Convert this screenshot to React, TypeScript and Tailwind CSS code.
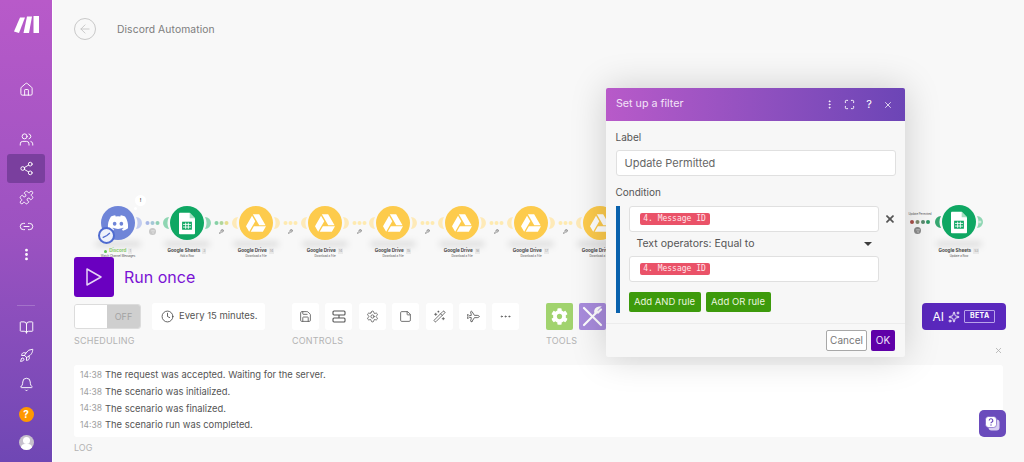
import type { ReactNode } from 'react';
import {
  ArrowLeft,
  Bell,
  BookOpen,
  Clock,
  EllipsisVertical,
  Ellipsis,
  House,
  Link2,
  Maximize,
  Plane,
  Puzzle,
  Rocket,
  Save,
  Settings,
  Share2,
  StickyNote,
  Users,
  WandSparkles,
  Wrench,
  X,
  Sparkles,
  Filter,
} from 'lucide-react';
import { FaDiscord, FaGoogleDrive, FaCog } from 'react-icons/fa';

const logLines = [
  'The request was accepted. Waiting for the server.',
  'The scenario was initialized.',
  'The scenario was finalized.',
  'The scenario run was completed.',
];

type NodeKind = 'discord' | 'sheets' | 'drive';

const nodes: {
  kind: NodeKind;
  x: number;
  title: string;
  sub: string;
  id: string;
  dots?: string[];
  filter?: boolean;
}[] = [
  { kind: 'discord', x: 118, title: 'Discord', sub: 'Watch Channel Messages', id: '1', dots: ['#a9b8e6', '#a4c6d6', '#8fcfb4'], filter: true },
  { kind: 'sheets', x: 187, title: 'Google Sheets', sub: 'Add a Row', id: '3', dots: ['#86d0a6', '#b0d69a', '#e6dd90'] },
  { kind: 'drive', x: 256, title: 'Google Drive', sub: 'Download a File', id: '14' },
  { kind: 'drive', x: 325, title: 'Google Drive', sub: 'Download a File', id: '14' },
  { kind: 'drive', x: 393, title: 'Google Drive', sub: 'Download a File', id: '15' },
  { kind: 'drive', x: 462, title: 'Google Drive', sub: 'Download a File', id: '16' },
  { kind: 'drive', x: 531, title: 'Google Drive', sub: 'Download a File', id: '17' },
  { kind: 'drive', x: 600, title: 'Google Drive', sub: 'Download a File', id: '18' },
];

const palette = {
  discord: { bg: 'bg-[#6f85d8]', side: '#c3cdf0' },
  sheets: { bg: 'bg-[#0fa763]', side: '#8fd6b3' },
  drive: { bg: 'bg-[#fdcb4c]', side: '#feeab8' },
};

function SheetGlyph() {
  return (
    <svg width="16" height="23" viewBox="0 0 18 24">
      <path d="M1 0h11l6 6v17a1 1 0 0 1-1 1H1a1 1 0 0 1-1-1V1a1 1 0 0 1 1-1z" fill="#fff" />
      <path d="M12 0l6 6h-6z" fill="#a5dfc1" />
      <rect x="3.500" y="10" width="11" height="9" fill="#0fa763" />
      <path d="M4.500 13h9M4.500 16h9M7.500 11v7M10.500 11v7" stroke="#fff" strokeWidth="1" />
    </svg>
  );
}

function ModuleNode({ node }: { node: (typeof nodes)[number] }) {
  const p = palette[node.kind];
  const dots = node.dots ?? ['#feeab0', '#feeab0', '#feeab0'];
  return (
    <div className="absolute top-[204px] w-[70px] h-[60px]" style={{ left: node.x - 35 - 53 }}>
      <div className="absolute left-[12px] top-[37px] w-[46px] h-[6px] rounded-full bg-black/10 blur-[3px]" />
      <svg className="absolute left-0 top-0" width="110" height="40" viewBox="0 0 110 40">
        {node.kind !== 'discord' && <path d="M17 13 A 6 6 0 0 0 17 25 A 13 13 0 0 1 17 13z" fill={p.side} />}
        <path d="M53 13 A 6 6 0 0 1 53 25 A 13 13 0 0 0 53 13z" fill={p.side} />
        <circle cx="64.500" cy="19" r="2" fill={dots[0]} />
        <circle cx="69.500" cy="19" r="2" fill={dots[1]} />
        <circle cx="74.500" cy="19" r="2" fill={dots[2]} />
      </svg>
      <div className={`absolute left-[18px] top-[2px] w-[34px] h-[34px] rounded-full flex items-center justify-center ${p.bg}`}>
        {node.kind === 'discord' && <FaDiscord className="text-white w-[22px] h-[22px]" />}
        {node.kind === 'sheets' && <SheetGlyph />}
        {node.kind === 'drive' && <FaGoogleDrive className="text-white w-[20px] h-[20px]" />}
      </div>
      {node.kind === 'discord' && (
        <>
          <div className="absolute left-[15px] top-[23px] w-[17px] h-[17px] rounded-full bg-[#eef1fb] border-2 border-[#4f6bd0] flex items-center justify-center">
            <svg width="11" height="11" viewBox="0 0 13 13">
              <path d="M2 9l5-2.500 3.500-3" stroke="#4f6bd0" strokeWidth="1.500" fill="none" />
            </svg>
          </div>
          <div className="absolute left-[52px] top-[-9px] w-[11px] h-[11px] rounded-full bg-white flex items-center justify-center text-[5px] font-bold text-[#555]">!</div>
          <div className="absolute left-[51px] top-[3px] w-[3px] h-[3px] rounded-full bg-white" />
        </>
      )}
      {node.filter ? (
        <div className="absolute left-[66px] top-[24px] w-[7px] h-[7px] rounded-full bg-[#c8c8c8] flex items-center justify-center">
          <Filter className="w-[4px] h-[4px] text-white" />
        </div>
      ) : (
        <Wrench className="absolute left-[67px] top-[25px] w-[5px] h-[5px] text-[#666]" strokeWidth={3} />
      )}
      <div className="absolute left-0 top-[44px] w-[70px] flex justify-center items-center gap-[2px] text-[4.600px] leading-[6px] font-bold text-[#4a4a4a] whitespace-nowrap">
        {node.kind === 'discord' && <span className="w-[3px] h-[3px] rounded-full bg-[#62c554]" />}
        <span className={node.kind === 'discord' ? 'text-[#8ac968]' : ''}>{node.title}</span>
        <span className="px-[1px] bg-[#e9e9e9] text-[#999] text-[3.500px] font-normal">{node.id}</span>
      </div>
      <div className="absolute left-0 top-[49.500px] w-[70px] text-center text-[2.800px] leading-[4px] text-[#555] whitespace-nowrap">{node.sub}</div>
    </div>
  );
}

function ToolLabel({ children }: { children: ReactNode }) {
  return <div className="mt-[5px] text-[9px] leading-[11px] text-[#b3b3b3] tracking-[0.2px]">{children}</div>;
}

function ControlButton({ children }: { children: ReactNode }) {
  return <div className="w-[27px] h-[27px] rounded-[3px] bg-white flex items-center justify-center text-[#555]">{children}</div>;
}

function MessageTag() {
  return (
    <span className="inline-flex items-center h-[12px] w-[70px] justify-center whitespace-nowrap rounded-[2px] bg-[#ea5268] text-[#ffe4e8] text-[8px] font-['DejaVu_Sans_Mono',monospace]">
      4. Message ID
    </span>
  );
}

export default function App() {
  return (
    <div className="relative flex w-[1024px] h-[462px] overflow-hidden bg-[#f8f8f8] font-['Inter',sans-serif]">
      {/* Sidebar */}
      <aside className="w-[52px] shrink-0 flex flex-col items-center bg-gradient-to-b from-[#b85ac9] via-[#9c52c1] to-[#6f47b4] text-white">
        <svg className="mt-[16px]" width="25" height="18" viewBox="0 0 25 18" fill="#fff">
          <path d="M6 1.500h5L5 17 0 15.500z" />
          <path d="M13 .5h5L15 17h-5.500z" />
          <path d="M19.500 0H25v17h-5.500z" />
        </svg>
        <House className="mt-[47.500px] w-[15px] h-[15px]" strokeWidth={1.500} />
        <div className="mt-[32px] h-[21px] w-[38px] flex items-center justify-center">
          <Users className="w-[15px] h-[15px]" strokeWidth={1.500} />
        </div>
        <div className="mt-[4.500px] h-[29px] w-[38px] flex items-center justify-center rounded-[3px] bg-[#7a3f9e]">
          <Share2 className="w-[15px] h-[15px]" strokeWidth={1.500} />
        </div>
        <div className="mt-[3.500px] h-[21px] w-[38px] flex items-center justify-center">
          <Puzzle className="w-[15px] h-[15px]" strokeWidth={1.500} />
        </div>
        <div className="mt-[8px] h-[21px] w-[38px] flex items-center justify-center">
          <Link2 className="w-[15px] h-[15px]" strokeWidth={1.500} />
        </div>
        <EllipsisVertical className="mt-[10px] w-[15px] h-[15px]" strokeWidth={2.500} />
        <div className="mt-[43.500px] w-[18px] h-px bg-white/20" />
        <BookOpen className="mt-[14px] w-[15px] h-[15px]" strokeWidth={1.500} />
        <Rocket className="mt-[13px] w-[15px] h-[15px]" strokeWidth={1.500} />
        <Bell className="mt-[14px] w-[15px] h-[15px]" strokeWidth={1.500} />
        <div className="mt-[14.500px] w-[15px] h-[15px] rounded-full bg-[#ff9800] flex items-center justify-center text-[10px] font-bold">?</div>
        <div className="relative mt-[13px] w-[15px] h-[15px] rounded-full bg-[#c6c0cc] overflow-hidden">
          <div className="absolute left-[4px] top-[2px] w-[7px] h-[7px] rounded-full bg-white" />
          <div className="absolute left-[2px] top-[9px] w-[11px] h-[8px] rounded-full bg-white" />
        </div>
      </aside>
      <div className="w-px shrink-0 bg-white" />

      {/* Main */}
      <main className="relative flex-1 min-w-0 pl-[21px]">
        <header className="h-[58px] flex items-center">
          <div className="w-[22px] h-[22px] rounded-full border border-[#c9c9c9] flex items-center justify-center">
            <ArrowLeft className="w-[14px] h-[14px] text-[#c4c4c4]" strokeWidth={1.500} />
          </div>
          <span className="ml-[21px] pt-[1px] text-[10.300px] text-[#7d7d7d] tracking-[0.1px]">Discord Automation</span>
        </header>

        <div className="h-[199px]" />
        {nodes.map((n, i) => (
          <ModuleNode key={i} node={n} />
        ))}

        {/* Last module, sits on the right of the dialog */}
        <div className="absolute left-[854px] top-[204px] w-[110px] h-[60px]">
          <div className="absolute left-[29px] top-[37px] w-[46px] h-[6px] rounded-full bg-black/10 blur-[3px]" />
          <svg className="absolute left-0 top-0" width="110" height="40" viewBox="0 0 110 40">
            <path d="M34 12 A 6 6 0 0 0 34 24 A 13 13 0 0 1 34 12z" fill="#37a872" />
            <path d="M70 12 A 6 6 0 0 1 70 24 A 13 13 0 0 0 70 12z" fill="#8fd6b3" />
            <path d="M71.500 18h3M73 16.500v3" stroke="#fff" strokeWidth=".7" />
            <circle cx="5" cy="18" r="2" fill="#a8514a" />
            <circle cx="10.500" cy="18" r="2" fill="#7e8a6e" />
            <circle cx="16" cy="18" r="2" fill="#5a8a6e" />
            <circle cx="21" cy="18" r="2" fill="#2f9a66" />
          </svg>
          <div className="absolute left-[35px] top-[1px] w-[34px] h-[34px] rounded-full bg-[#0fa763] flex items-center justify-center">
            <SheetGlyph />
          </div>
          <div className="absolute left-0 top-[8px] w-[26px] text-center text-[2.800px] leading-[4px] text-[#555] whitespace-nowrap">Update Permitted</div>
          <div className="absolute left-[7px] top-[23px] w-[7px] h-[7px] rounded-full bg-[#8a8a8a] flex items-center justify-center">
            <Filter className="w-[4px] h-[4px] text-white" />
          </div>
          <div className="absolute left-[17px] top-[44px] w-[70px] flex justify-center items-center gap-[2px] text-[4.600px] leading-[6px] font-bold text-[#4a4a4a] whitespace-nowrap">
            <span>Google Sheets</span>
            <span className="px-[1px] bg-[#e9e9e9] text-[#999] text-[3.500px] font-normal">53</span>
          </div>
          <div className="absolute left-[17px] top-[49.500px] w-[70px] text-center text-[2.800px] leading-[4px] text-[#555] whitespace-nowrap">Update a Row</div>
        </div>

        {/* Run once */}
        <div className="flex items-center h-[40px]">
          <button className="w-[40px] h-[40px] rounded-[3px] bg-[#6a00c0] flex items-center justify-center">
            <svg width="18" height="20" viewBox="0 0 18 20" fill="none">
              <path d="M2 2l14 8-14 8z" stroke="#e6d4f6" strokeWidth="1.500" strokeLinejoin="round" />
            </svg>
          </button>
          <span className="ml-[10px] text-[16px] text-[#7a12d4]">Run once</span>
        </div>

        {/* Toolbar */}
        <div className="flex mt-[6px] pr-[18px]">
          <div className="w-[218px] shrink-0">
            <div className="flex items-center">
              <div className="flex w-[67px] h-[25px] rounded-[3px] border border-[#dcdcdc] overflow-hidden">
                <div className="w-[32px] bg-white" />
                <div className="flex-1 bg-[#cfcfcf] flex items-center justify-center text-[9px] text-[#a3a3a3]">OFF</div>
              </div>
              <div className="ml-[11px] w-[113px] h-[27px] rounded-[3px] bg-white flex items-center gap-[5px] pl-[9px] text-[9.500px] text-[#555]">
                <Clock className="w-[13px] h-[13px] text-[#444]" strokeWidth={1.500} />
                Every 15 minutes.
              </div>
            </div>
            <ToolLabel>SCHEDULING</ToolLabel>
          </div>

          <div className="w-[254px] shrink-0">
            <div className="flex gap-[6.400px]">
              <ControlButton><Save className="w-[13px] h-[13px]" strokeWidth={1.500} /></ControlButton>
              <ControlButton>
                <svg width="14" height="13" viewBox="0 0 14 13" fill="none" stroke="currentColor" strokeWidth="1.100">
                  <rect x="1" y="1" width="12" height="4" rx="1" />
                  <rect x="1" y="8" width="12" height="4" rx="1" />
                  <path d="M7 5v3" />
                </svg>
              </ControlButton>
              <ControlButton><Settings className="w-[13px] h-[13px]" strokeWidth={1.500} /></ControlButton>
              <ControlButton><StickyNote className="w-[13px] h-[13px]" strokeWidth={1.500} /></ControlButton>
              <ControlButton><WandSparkles className="w-[13px] h-[13px]" strokeWidth={1.500} /></ControlButton>
              <ControlButton><Plane className="w-[13px] h-[13px] rotate-45" strokeWidth={1.500} /></ControlButton>
              <ControlButton><Ellipsis className="w-[13px] h-[13px]" strokeWidth={1.500} /></ControlButton>
            </div>
            <ToolLabel>CONTROLS</ToolLabel>
          </div>

          <div>
            <div className="flex gap-[6px]">
              <div className="w-[27px] h-[27px] rounded-[2px] bg-[#a1d36e] flex items-center justify-center">
                <FaCog className="w-[17px] h-[17px] text-white" />
              </div>
              <div className="w-[27px] h-[27px] rounded-[2px] bg-[#a88bdc] flex items-center justify-center">
                <svg width="21" height="21" viewBox="0 0 21 21" fill="none" stroke="#fff" strokeWidth="2.200" strokeLinecap="round">
                  <path d="M2 2l17 17" />
                  <path d="M2 19L14 7" />
                  <path d="M19 3.500l-3 3-2-2 3-3a4 4 0 0 0-3.500 5.500" />
                </svg>
              </div>
            </div>
            <ToolLabel>TOOLS</ToolLabel>
          </div>

          <button className="ml-auto h-[27px] w-[84px] rounded-[4px] bg-[#5a28bd] flex items-center justify-center gap-[4px] text-white text-[12px]">
            AI
            <Sparkles className="w-[12px] h-[12px]" strokeWidth={1.800} />
            <span className="border border-[#b9a3ea] rounded-[1px] px-[5px] h-[13px] flex items-center text-[7px] font-bold tracking-[0.3px]">BETA</span>
          </button>
        </div>

        {/* Log */}
        <div className="relative mt-[19px] w-[929px] h-[72px] rounded-[3px] bg-white py-[2px] pl-[6px]">
          <X className="absolute right-0 top-[-19px] w-[9px] h-[9px] text-[#aaa]" />
          {logLines.map((line) => (
            <div key={line} className="h-[16.700px] flex items-center">
              <span className="w-[25px] text-[8.500px] text-[#a0a0a0]">14:38</span>
              <span className="text-[9.400px] text-[#555]">{line}</span>
            </div>
          ))}
        </div>
        <div className="mt-[5px] text-[9px] leading-[11px] text-[#b3b3b3]">LOG</div>

        <button className="absolute right-[18px] top-[410px] w-[27px] h-[27px] rounded-[5px] bg-[#6a4bbc] flex items-center justify-center">
          <svg width="15" height="15" viewBox="0 0 15 15">
            <rect x="3.500" y="3.500" width="11" height="11" rx="3" fill="#d9cff2" />
            <rect x="0.500" y="0.500" width="11" height="11" rx="3" fill="#fff" stroke="#6a4bbc" strokeWidth=".6" />
            <path d="M4.200 4.500a1.800 1.800 0 1 1 2.500 1.700c-.5.2-.7.500-.7 1" stroke="#6a4bbc" strokeWidth="1.200" fill="none" />
            <circle cx="6" cy="9" r=".7" fill="#6a4bbc" />
          </svg>
        </button>
      </main>

      {/* Filter dialog */}
      <section className="absolute left-[606px] top-[88px] w-[299px] h-[269px] bg-[#f7f7f7] rounded-[2px] shadow-[0_0_36px_rgba(0,0,0,0.18)]">
        <div className="h-[33px] flex items-center pl-[10px] pr-[12px] rounded-t-[2px] bg-gradient-to-r from-[#b85ac9] to-[#6c45b6] text-white">
          <span className="text-[10.700px] text-[#f3e4f8]">Set up a filter</span>
          <div className="ml-auto flex items-center gap-[9px]">
            <EllipsisVertical className="w-[11px] h-[11px]" strokeWidth={2} />
            <Maximize className="w-[11px] h-[11px]" strokeWidth={2} />
            <span className="text-[11px] w-[10px] text-center">?</span>
            <X className="w-[10px] h-[10px]" strokeWidth={1.800} />
          </div>
        </div>
        <div className="px-[9.500px] pt-[9px]">
          <div className="text-[10px] leading-[14px] text-[#555]">Label</div>
          <div className="mt-[6px] h-[26px] w-[280px] rounded-[3px] border border-[#e0e0e0] bg-white flex items-center pl-[8px] text-[11px] text-[#666]">
            Update Permitted
          </div>
          <div className="mt-[9px] text-[10px] leading-[14px] text-[#555]">Condition</div>
          <div className="mt-[7px] flex border-l-[4px] border-[#0a62ad] pl-[9px] h-[107px]">
            <div className="w-[251px]">
              <div className="h-[26px] rounded-[3px] border border-[#e0e0e0] bg-white flex items-center pl-[10px]">
                <MessageTag />
              </div>
              <div className="h-[24px] flex items-center justify-between pl-[8px] pr-[7px] text-[10.500px] text-[#555]">
                Text operators: Equal to
                <span className="w-0 h-0 border-x-[4px] border-x-transparent border-t-[4px] border-t-[#3d3d3d]" />
              </div>
              <div className="h-[26px] rounded-[3px] border border-[#e0e0e0] bg-white flex items-center pl-[10px]">
                <MessageTag />
              </div>
              <div className="mt-[10px] flex gap-[5px]">
                <button className="w-[72px] h-[20px] rounded-[2px] bg-[#3d9a0c] text-[#e9f6df] text-[9.500px]">Add AND rule</button>
                <button className="w-[65px] h-[20px] rounded-[2px] bg-[#3d9a0c] text-[#e9f6df] text-[9.500px]">Add OR rule</button>
              </div>
            </div>
            <X className="ml-[5px] mt-[7px] w-[12px] h-[12px] text-[#555]" strokeWidth={3.500} />
          </div>
        </div>
        <div className="mt-[10px] border-t border-[#ececec] flex justify-end gap-[4px] pt-[6px] pr-[10px]">
          <button className="w-[41px] h-[21px] rounded-[2px] border border-[#a8a8a8] bg-white text-[10px] text-[#777]">Cancel</button>
          <button className="w-[24px] h-[21px] rounded-[2px] bg-[#5f00a8] text-[10px] text-[#efe2fa]">OK</button>
        </div>
      </section>
    </div>
  );
}
